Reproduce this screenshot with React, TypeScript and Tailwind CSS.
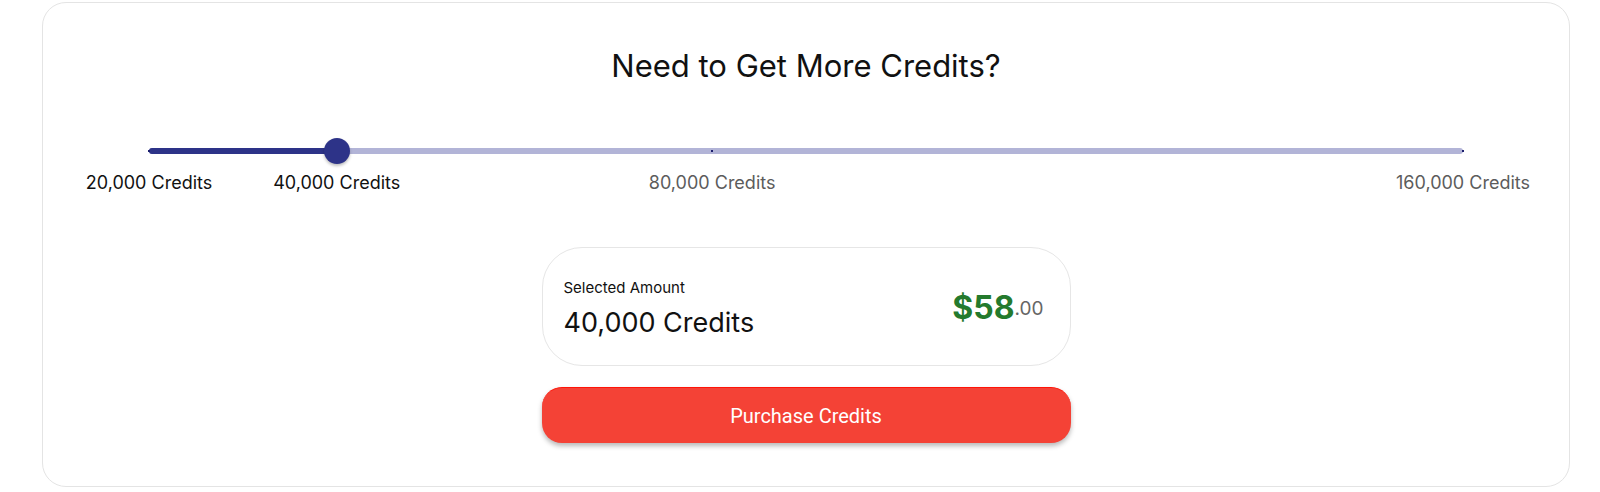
import { useState } from 'react'

const MIN = 20000
const MAX = 160000
const marks = [20000, 40000, 80000, 160000]

const pct = (v: number) => ((v - MIN) / (MAX - MIN)) * 100
const fmt = (v: number) => v.toLocaleString('en-US')

function CreditSlider({ value }: { value: number }) {
  return (
    <div className="w-full px-[106px]">
      <div className="relative h-[26px]">
        <div className="absolute left-0 right-0 top-1/2 h-[6px] -translate-y-1/2 rounded-full bg-[#b2b4d7]" />
        <div
          className="absolute left-0 top-1/2 h-[6px] -translate-y-1/2 rounded-full bg-[#2d3388]"
          style={{ width: `${pct(value)}%` }}
        />
        {marks.map((m) => (
          <span
            key={m}
            className="absolute top-1/2 h-[2px] w-[2px] -translate-x-1/2 -translate-y-1/2 bg-[#1c1f6e]"
            style={{ left: `${pct(m)}%` }}
          />
        ))}
        <span
          className="absolute top-1/2 h-[26px] w-[26px] -translate-x-1/2 -translate-y-1/2 rounded-full bg-[#2d3388] shadow-[0_2px_3px_rgba(0,0,0,0.25)]"
          style={{ left: `${pct(value)}%` }}
        />
      </div>
      <div className="relative mt-[7px] h-[24px]">
        {marks.map((m) => (
          <span
            key={m}
            className={`absolute top-0 -translate-x-1/2 whitespace-nowrap text-[18px] leading-[24px] ${
              m <= value ? 'text-[#111]' : 'text-[#5c5c5c]'
            }`}
            style={{ left: `${pct(m)}%` }}
          >
            {fmt(m)} Credits
          </span>
        ))}
      </div>
    </div>
  )
}

export default function App() {
  const [value] = useState(40000)

  return (
    <div className="bg-white pl-[42px] pr-[30px] pt-[2px]" style={{ fontFamily: 'Inter, "Noto Sans", sans-serif' }}>
      <div className="flex h-[485px] flex-col items-center rounded-[24px] border border-[#e4e4e4] pt-[45px]">
        <h2 className="text-[31px] leading-[36px] text-[#111]">Need to Get More Credits?</h2>

        <div className="mt-[54px] w-full">
          <CreditSlider value={value} />
        </div>

        <div className="mt-[52px] flex w-full flex-col items-center">
          <div className="flex h-[119px] w-[529px] items-center justify-between rounded-[40px] border border-[#e6e6e6] pl-[21px] pr-[26px]">
            <div className="flex flex-col pt-[4px]">
              <span className="text-[15px] leading-[20px] text-[#111]">Selected Amount</span>
              <span className="mt-[9px] text-[27px] leading-[32px] text-[#111]">{fmt(value)} Credits</span>
            </div>
            <div className="flex items-center pt-[2px]">
              <span className="text-[32px] font-bold leading-[36px] text-[#247a2d]">$58</span>
              <span className="pt-[2px] text-[19px] leading-[24px] text-[#666]">.00</span>
            </div>
          </div>

          <button
            type="button"
            className="mt-[21px] h-[56px] w-[529px] rounded-[20px] border-t border-t-[#ff1408] bg-[#f44236] text-[20px] text-white shadow-[0_3px_5px_rgba(0,0,0,0.28)]"
            style={{ fontFamily: 'Roboto, "Liberation Sans", sans-serif' }}
          >
            Purchase Credits
          </button>
        </div>
      </div>
    </div>
  )
}
